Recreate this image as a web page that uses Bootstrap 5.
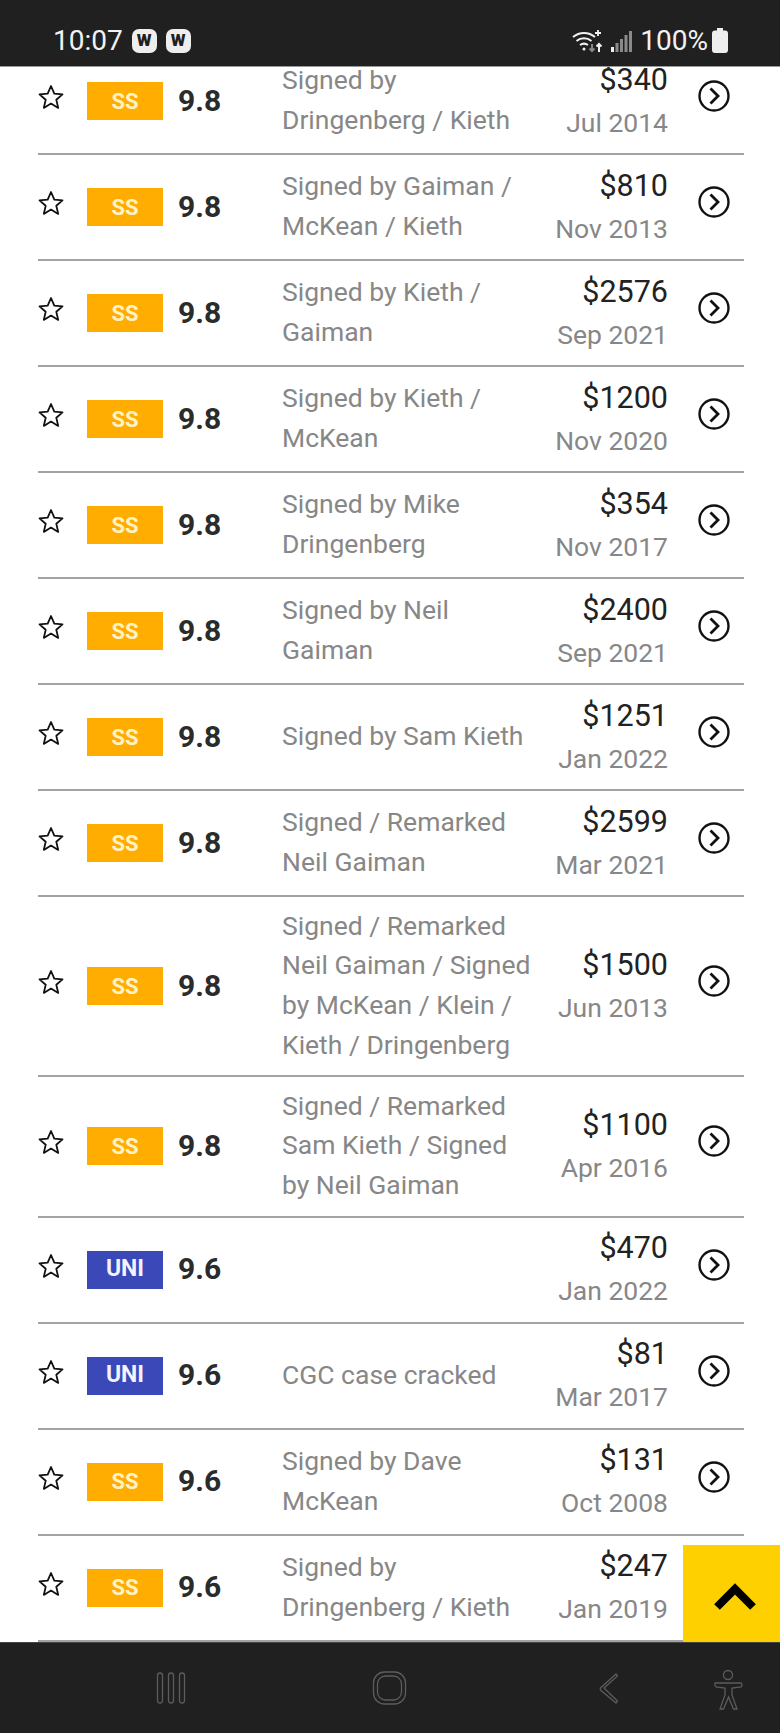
<!DOCTYPE html>
<html lang="en"><head><meta charset="utf-8">
<link href="https://cdn.jsdelivr.net/npm/bootstrap@5.3.0/dist/css/bootstrap.min.css" rel="stylesheet">
<style>
html,body{margin:0;height:100%;background:#fff;font-family:Roboto,"Liberation Sans",sans-serif}
.frame{height:1733px;width:780px;overflow:hidden;position:relative}
.statusbar{height:67px;flex:none;background:#202020;color:#f2f2f2;border-bottom:1px solid #999;padding:15px 52px 0 53px;font-size:28px;line-height:1;z-index:2}
.navbarbottom{height:91px;flex:none;background:#202020;border-top:1px solid #444;z-index:2}
.wbadge{width:25px;height:24px;border-radius:7px;background:#eee;color:#202020;font-weight:900;font-size:17px;margin-left:9px}
.scrollarea{flex:1 1 auto;min-height:0;overflow:hidden;padding:0 36px 0 38px}
.first-row{margin-top:-18px}
.entry{border-bottom:2px solid #a3a3a3;padding:8.5px 0;min-height:106px}
.staricon{width:26px;height:26px;margin-right:23px;margin-top:-8px}
.gradebadge{width:76px;height:38px;color:#fff;font-weight:700;font-size:22px;margin-right:15px}
.ss{background:#ffad00;color:#fff3c4}
.uni{background:#3a48b8;color:#f2f3ff;font-size:23px}
.gradeval{width:104px;font-size:30px;line-height:1.2;font-weight:700;color:#2b2b2b;padding-bottom:1px}
.descr{width:250px;font-size:26.5px;line-height:39.8px;color:#878787;padding:0 0 2px}
.pricecol{width:135px;margin-left:auto}
.priceval{font-size:30.5px;line-height:43px;color:#222}
.dateval{font-size:26.5px;line-height:44px;color:#878787}
.goicon{width:32px;height:32px;margin:-10px 14px 0 30px}
.totop{position:absolute;right:0;bottom:91px;width:97px;height:97px;background:#ffd000;padding:6px 0 0 6px}
</style></head><body>
<div class="frame d-flex flex-column">
 <div class="statusbar d-flex align-items-center justify-content-between">
  <div class="d-flex align-items-center"><span>10:07</span>
   <span class="wbadge d-flex align-items-center justify-content-center">W</span>
   <span class="wbadge d-flex align-items-center justify-content-center">W</span></div>
  <div class="d-flex align-items-center">
   <svg width="31" height="24" viewBox="0 0 31 24" fill="none" stroke="#f2f2f2" stroke-width="2" class="me-2"><path d="M1 8a17 17 0 0 1 22 0M4.500 12a12 12 0 0 1 15 0M8 16a7 7 0 0 1 8 0"/><circle cx="12" cy="20" r="1.500" fill="#f2f2f2" stroke="none"/><path d="M26 1v6M23 4h6" stroke-width="1.800"/><path d="M20 15v7m-2.500-2.500L20 22l2.500-2.500" stroke="#888"/><path d="M27 23v-8m-2.500 2.500L27 15l2.500 2.500"/></svg>
   <svg width="21" height="22" viewBox="0 0 21 22" fill="#8a8a8a" class="me-2"><rect x="0" y="17" width="3" height="5" fill="#eee"/><rect x="4.500" y="13" width="3" height="9"/><rect x="9" y="9" width="3" height="13"/><rect x="13.500" y="5" width="3" height="17"/><rect x="18" y="1" width="3" height="21"/></svg>
   <span class="me-1">100%</span>
   <svg width="16" height="25" viewBox="0 0 16 25" fill="#eee"><path d="M5 0h6v2.500h2a3 3 0 0 1 3 3V22a3 3 0 0 1-3 3H3a3 3 0 0 1-3-3V5.500a3 3 0 0 1 3-3h2z"/></svg>
  </div>
 </div>
 <div class="scrollarea" id="list"></div>
 <div class="navbarbottom d-flex">
  <svg width="780" height="90" viewBox="0 0 780 90" fill="none" stroke="#5c5c5c" stroke-width="1.300">
   <rect x="157.500" y="30" width="5" height="30" rx="2.500"/><rect x="168.500" y="30" width="5" height="30" rx="2.500"/><rect x="179.500" y="30" width="5" height="30" rx="2.500"/>
   <rect x="373.500" y="29" width="32" height="32" rx="11"/><rect x="377.500" y="33" width="24" height="24" rx="8"/>
   <path d="M616 31l-15 13.500q-1.500 1.500 0 3L616 60l1.500-2-13.500-13 13.500-12z"/>
   <circle cx="728" cy="32" r="4.500"/><path d="M715 40h10q3 0 6 0h10q2 2 0 4l-9 1v7l5 14h-3.500l-5-12-5 12H720l5-14v-7l-9-1q-2-2-1-4z"/>
  </svg>
 </div>
 <div class="totop d-flex align-items-center justify-content-center">
  <svg width="42" height="27" viewBox="0 0 42 27" fill="none" stroke="#000" stroke-width="8"><path d="M3 24L21 6l18 18"/></svg>
 </div>
</div>
<script>
const rows=[["SS","9.8",["Signed by","Dringenberg / Kieth"],"$340","Jul 2014"],
["SS","9.8",["Signed by Gaiman /","McKean / Kieth"],"$810","Nov 2013"],
["SS","9.8",["Signed by Kieth /","Gaiman"],"$2576","Sep 2021"],
["SS","9.8",["Signed by Kieth /","McKean"],"$1200","Nov 2020"],
["SS","9.8",["Signed by Mike","Dringenberg"],"$354","Nov 2017"],
["SS","9.8",["Signed by Neil","Gaiman"],"$2400","Sep 2021"],
["SS","9.8",["Signed by Sam Kieth"],"$1251","Jan 2022"],
["SS","9.8",["Signed / Remarked","Neil Gaiman"],"$2599","Mar 2021"],
["SS","9.8",["Signed / Remarked","Neil Gaiman / Signed","by McKean / Klein /","Kieth / Dringenberg"],"$1500","Jun 2013"],
["SS","9.8",["Signed / Remarked","Sam Kieth / Signed","by Neil Gaiman"],"$1100","Apr 2016"],
["UNI","9.6",[],"$470","Jan 2022"],
["UNI","9.6",["CGC case cracked"],"$81","Mar 2017"],
["SS","9.6",["Signed by Dave","McKean"],"$131","Oct 2008"],
["SS","9.6",["Signed by","Dringenberg / Kieth"],"$247","Jan 2019"]];
const star='<svg class="staricon flex-none" viewBox="0 0 26 26" fill="none" stroke="#111" stroke-width="1.800" stroke-linejoin="round"><path d="M13 2l3.300 7.600 8.200.8-6.200 5.400 1.900 8.100L13 19.600l-7.200 4.300 1.900-8.100L1.500 10.400l8.200-.8z"/></svg>';
const go='<svg class="goicon" viewBox="0 0 32 32" fill="none" stroke="#111"><circle cx="16" cy="16" r="14.500" stroke-width="2.400"/><path d="M12.500 8.500l7.500 7.500-7.500 7.500" stroke-width="2.800"/></svg>';
document.getElementById('list').innerHTML=rows.map((r,i)=>`<div class="entry d-flex align-items-center ${i==0?'first-row':''}">${star}<div class="gradebadge ${r[0]=='SS'?'ss':'uni'} d-flex align-items-center justify-content-center">${r[0]}</div><div class="gradeval">${r[1]}</div><div class="descr">${r[2].join('<br>')}</div><div class="pricecol text-end"><div class="priceval">${r[3]}</div><div class="dateval">${r[4]}</div></div>${go}</div>`).join('');
</script>
<script src="https://cdn.jsdelivr.net/npm/bootstrap@5.3.0/dist/js/bootstrap.bundle.min.js"></script>
</body></html>
